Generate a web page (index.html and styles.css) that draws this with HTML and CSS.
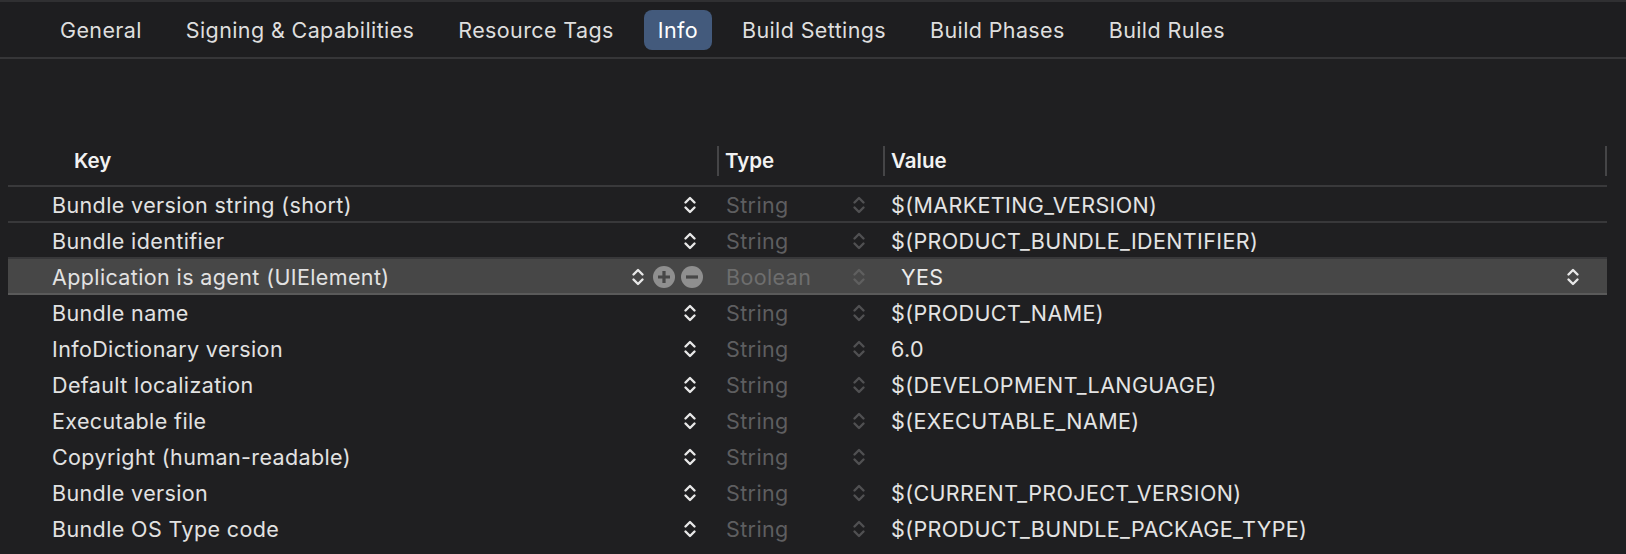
FILE: index.html
```html
<!DOCTYPE html>
<html>
<head>
<meta charset="utf-8">
<link rel="stylesheet" href="styles.css">
</head>
<body>
<div class="tabbar">
  <div class="tab">General</div>
  <div class="tab">Signing &amp; Capabilities</div>
  <div class="tab">Resource Tags</div>
  <div class="tab active">Info</div>
  <div class="tab">Build Settings</div>
  <div class="tab">Build Phases</div>
  <div class="tab">Build Rules</div>
</div>
<div class="table">
  <div class="head">
    <div class="hcell key">Key</div>
    <div class="hcell sep">Type</div>
    <div class="hcell sep">Value</div>
    <div class="hend"></div>
  </div>
  <div class="row lined">
    <div class="cell key"><span class="k">Bundle version string (short)</span><svg class="chev" viewBox="0 0 14 22"><path d="M2.5 8.5 L7 4 L11.5 8.5 M2.5 13.5 L7 18 L11.5 13.5"/></svg></div>
    <div class="cell type"><span class="t">String</span><svg class="chev dim" viewBox="0 0 14 22"><path d="M2.5 8.5 L7 4 L11.5 8.5 M2.5 13.5 L7 18 L11.5 13.5"/></svg></div>
    <div class="cell val">$(MARKETING_VERSION)</div>
  </div>
  <div class="row lined">
    <div class="cell key"><span class="k">Bundle identifier</span><svg class="chev" viewBox="0 0 14 22"><path d="M2.5 8.5 L7 4 L11.5 8.5 M2.5 13.5 L7 18 L11.5 13.5"/></svg></div>
    <div class="cell type"><span class="t">String</span><svg class="chev dim" viewBox="0 0 14 22"><path d="M2.5 8.5 L7 4 L11.5 8.5 M2.5 13.5 L7 18 L11.5 13.5"/></svg></div>
    <div class="cell val">$(PRODUCT_BUNDLE_IDENTIFIER)</div>
  </div>
  <div class="row selected">
    <div class="cell key"><span class="k">Application is agent (UIElement)</span>
      <span class="tools">
        <svg class="chev" viewBox="0 0 14 22"><path d="M2.5 8.5 L7 4 L11.5 8.5 M2.5 13.5 L7 18 L11.5 13.5"/></svg>
        <svg class="circ" viewBox="0 0 24 24"><circle cx="12" cy="12" r="11"/><path d="M12 6 V18 M6 12 H18"/></svg>
        <svg class="circ" viewBox="0 0 24 24"><circle cx="12" cy="12" r="11"/><path d="M6 12 H18"/></svg>
      </span>
    </div>
    <div class="cell type"><span class="t">Boolean</span><svg class="chev dim" viewBox="0 0 14 22"><path d="M2.5 8.5 L7 4 L11.5 8.5 M2.5 13.5 L7 18 L11.5 13.5"/></svg></div>
    <div class="cell val popup"><span class="yes">YES</span><svg class="chev" viewBox="0 0 14 22"><path d="M2.5 8.5 L7 4 L11.5 8.5 M2.5 13.5 L7 18 L11.5 13.5"/></svg></div>
  </div>
  <div class="row">
    <div class="cell key"><span class="k">Bundle name</span><svg class="chev" viewBox="0 0 14 22"><path d="M2.5 8.5 L7 4 L11.5 8.5 M2.5 13.5 L7 18 L11.5 13.5"/></svg></div>
    <div class="cell type"><span class="t">String</span><svg class="chev dim" viewBox="0 0 14 22"><path d="M2.5 8.5 L7 4 L11.5 8.5 M2.5 13.5 L7 18 L11.5 13.5"/></svg></div>
    <div class="cell val">$(PRODUCT_NAME)</div>
  </div>
  <div class="row">
    <div class="cell key"><span class="k">InfoDictionary version</span><svg class="chev" viewBox="0 0 14 22"><path d="M2.5 8.5 L7 4 L11.5 8.5 M2.5 13.5 L7 18 L11.5 13.5"/></svg></div>
    <div class="cell type"><span class="t">String</span><svg class="chev dim" viewBox="0 0 14 22"><path d="M2.5 8.5 L7 4 L11.5 8.5 M2.5 13.5 L7 18 L11.5 13.5"/></svg></div>
    <div class="cell val">6.0</div>
  </div>
  <div class="row">
    <div class="cell key"><span class="k">Default localization</span><svg class="chev" viewBox="0 0 14 22"><path d="M2.5 8.5 L7 4 L11.5 8.5 M2.5 13.5 L7 18 L11.5 13.5"/></svg></div>
    <div class="cell type"><span class="t">String</span><svg class="chev dim" viewBox="0 0 14 22"><path d="M2.5 8.5 L7 4 L11.5 8.5 M2.5 13.5 L7 18 L11.5 13.5"/></svg></div>
    <div class="cell val">$(DEVELOPMENT_LANGUAGE)</div>
  </div>
  <div class="row">
    <div class="cell key"><span class="k">Executable file</span><svg class="chev" viewBox="0 0 14 22"><path d="M2.5 8.5 L7 4 L11.5 8.5 M2.5 13.5 L7 18 L11.5 13.5"/></svg></div>
    <div class="cell type"><span class="t">String</span><svg class="chev dim" viewBox="0 0 14 22"><path d="M2.5 8.5 L7 4 L11.5 8.5 M2.5 13.5 L7 18 L11.5 13.5"/></svg></div>
    <div class="cell val">$(EXECUTABLE_NAME)</div>
  </div>
  <div class="row">
    <div class="cell key"><span class="k">Copyright (human-readable)</span><svg class="chev" viewBox="0 0 14 22"><path d="M2.5 8.5 L7 4 L11.5 8.5 M2.5 13.5 L7 18 L11.5 13.5"/></svg></div>
    <div class="cell type"><span class="t">String</span><svg class="chev dim" viewBox="0 0 14 22"><path d="M2.5 8.5 L7 4 L11.5 8.5 M2.5 13.5 L7 18 L11.5 13.5"/></svg></div>
    <div class="cell val"></div>
  </div>
  <div class="row">
    <div class="cell key"><span class="k">Bundle version</span><svg class="chev" viewBox="0 0 14 22"><path d="M2.5 8.5 L7 4 L11.5 8.5 M2.5 13.5 L7 18 L11.5 13.5"/></svg></div>
    <div class="cell type"><span class="t">String</span><svg class="chev dim" viewBox="0 0 14 22"><path d="M2.5 8.5 L7 4 L11.5 8.5 M2.5 13.5 L7 18 L11.5 13.5"/></svg></div>
    <div class="cell val">$(CURRENT_PROJECT_VERSION)</div>
  </div>
  <div class="row">
    <div class="cell key"><span class="k">Bundle OS Type code</span><svg class="chev" viewBox="0 0 14 22"><path d="M2.5 8.5 L7 4 L11.5 8.5 M2.5 13.5 L7 18 L11.5 13.5"/></svg></div>
    <div class="cell type"><span class="t">String</span><svg class="chev dim" viewBox="0 0 14 22"><path d="M2.5 8.5 L7 4 L11.5 8.5 M2.5 13.5 L7 18 L11.5 13.5"/></svg></div>
    <div class="cell val">$(PRODUCT_BUNDLE_PACKAGE_TYPE)</div>
  </div>
</div>
</body>
</html>
```
FILE: styles.css
```css
* { box-sizing: border-box; }
html, body {
  margin: 0;
  padding: 0;
  background: #1f1f21;
  font-family: Inter, "Noto Sans", "Liberation Sans", sans-serif;
  overflow: hidden;
}
.tabbar {
  height: 59px;
  border-top: 2px solid #303032;
  border-bottom: 2px solid #363638;
  background: #1e1e20;
  display: flex;
  align-items: center;
  gap: 16px;
  padding-left: 46px;
}
.tab {
  height: 40px;
  padding: 0 14px;
  display: flex;
  align-items: center;
  font-size: 21.5px;
  color: #dedede;
  border-radius: 8px;
  letter-spacing: 0.38px;
}
.tab.active {
  background: #435a7c;
  color: #ffffff;
}
.table {
  margin-top: 81px;
  margin-left: 8px;
  width: 1599px;
}
.head {
  display: grid;
  grid-template-columns: 709px 166px 1fr 2px;
  height: 47px;
  border-bottom: 2px solid #39393b;
  align-items: center;
  padding-bottom: 4px;
}
.hcell {
  font-size: 20.5px;
  font-weight: 600;
  color: #f2f2f2;
  height: 30px;
  display: flex;
  align-items: center;
}
.hcell.key { padding-left: 66px; }
.hcell.sep {
  border-left: 2px solid #454547;
  padding-left: 6px;
}
.hend {
  height: 30px;
  background: #454547;
}
.row {
  display: grid;
  grid-template-columns: 709px 166px 1fr;
  height: 36px;
  padding-top: 2px;
  border-bottom: 2px solid transparent;
  font-size: 21.5px;
  letter-spacing: 0.38px;
}
.row.lined { border-bottom-color: #38383a; }
.row.selected {
  background: #474747;
  border-bottom-color: #5a5a5a;
}
.cell {
  display: flex;
  align-items: center;
  min-width: 0;
}
.cell.key {
  padding-left: 44px;
  padding-right: 20px;
  color: #e2e2e2;
}
.k { flex: 1; white-space: nowrap; }
.cell.type {
  padding-left: 9px;
  padding-right: 17px;
  color: #5e5e60;
}
.row.selected .cell.type { color: #6e6e6e; }
.t { flex: 1; }
.cell.val {
  padding-left: 8px;
  color: #e4e4e4;
}
.cell.val.popup {
  padding-left: 18px;
  padding-right: 27px;
}
.yes { flex: 1; color: #ececec; }
.chev {
  width: 14px;
  height: 22px;
  fill: none;
  stroke: #e8e8e8;
  stroke-width: 2.4;
  stroke-linecap: round;
  stroke-linejoin: round;
  flex: none;
}
.chev.dim { stroke: #505052; }
.row.selected .chev.dim { stroke: #5f5f5f; }
.tools {
  display: flex;
  align-items: center;
  gap: 4px;
  margin-right: -7px;
}
.tools .chev { margin-right: 3px; }
.circ {
  width: 24px;
  height: 24px;
  flex: none;
}
.circ circle { fill: #8f8f8f; }
.circ path {
  stroke: #474747;
  stroke-width: 3.2;
  stroke-linecap: butt;
  fill: none;
}
```
